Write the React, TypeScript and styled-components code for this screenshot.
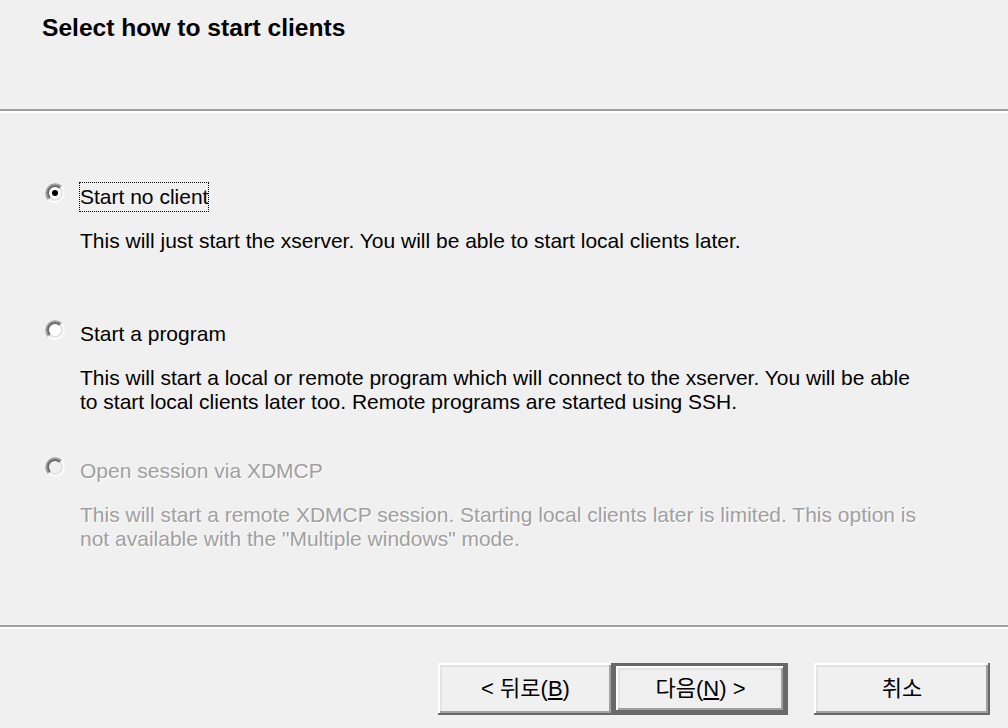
import React from 'react';
import styled, { createGlobalStyle } from 'styled-components';

const Global = createGlobalStyle`
  html, body { margin: 0; padding: 0; background: #f0f0f0; }
  body {
    width: 1008px; height: 728px; overflow: hidden;
    font-family: "Liberation Sans", Arial, "Noto Sans CJK KR", sans-serif;
  }
`;

const Dialog = styled.div`
  width: 1008px;
  height: 728px;
  display: flex;
  flex-direction: column;
  background: #f0f0f0;
  color: #000;
`;

const Header = styled.header`
  height: 109px;
  box-sizing: border-box;
  padding: 14px 0 0 42px;
`;

const Title = styled.h1`
  margin: 0;
  font-size: 24.6px;
  line-height: 28px;
  font-weight: bold;
`;

const Separator = styled.div`
  height: 0;
  border-top: 2px solid #a0a0a0;
  border-bottom: 2px solid #ffffff;
`;

const Body = styled.main`
  flex: 1;
  box-sizing: border-box;
  padding: 69px 0 0 45px;
  display: flex;
  flex-direction: column;
`;

const Option = styled.div`
  display: grid;
  grid-template-columns: 20px auto;
  column-gap: 14px;
  align-content: start;
  align-items: start;
  justify-content: start;
  height: 137px;
  font-size: 21px;
  line-height: 24px;
`;

const RadioSvg = styled.svg`
  display: block;
  width: 20px;
  height: 20px;
  margin-top: 1px;
`;

const Label = styled.span<{ $focused?: boolean; $disabled?: boolean }>`
  justify-self: start;
  padding: 2px 0;
  border: 1px dotted ${p => (p.$focused ? '#000' : 'transparent')};
  white-space: nowrap;
  color: ${p => (p.$disabled ? '#a0a0a0' : '#000')};
  text-shadow: ${p => (p.$disabled ? '1px 1px 0 #ffffff' : 'none')};
`;

const Desc = styled.p<{ $disabled?: boolean }>`
  grid-column: 2;
  margin: 17px 0 0;
  padding-left: 1px;
  white-space: nowrap;
  color: ${p => (p.$disabled ? '#a0a0a0' : '#000')};
  text-shadow: ${p => (p.$disabled ? '1px 1px 0 #ffffff' : 'none')};
`;

const Footer = styled.footer`
  height: 99px;
  box-sizing: border-box;
  padding: 34px 18px 0 0;
  display: flex;
  justify-content: flex-end;
  align-items: flex-start;
`;

const Button = styled.button<{ $default?: boolean; $width: number; $gap?: number }>`
  box-sizing: border-box;
  width: ${p => p.$width}px;
  height: 52px;
  margin: 0 0 0 ${p => p.$gap ?? 0}px;
  padding: 0;
  background: #f0f0f0;
  border: ${p => (p.$default ? '3px solid #696969' : 'none')};
  box-shadow:
    inset -2px -2px #696969,
    inset 2px 2px #ffffff,
    inset -4px -4px #a0a0a0,
    inset 4px 4px #e3e3e3;
  font-family: "Liberation Sans", Arial, "Noto Sans CJK KR", sans-serif;
  font-size: 22px;
  line-height: 24px;
  color: #000;
  display: flex;
  align-items: center;
  justify-content: center;
  cursor: default;
  u { text-underline-offset: 2px; }
`;

function Radio({ checked, disabled }: { checked?: boolean; disabled?: boolean }) {
  return (
    <RadioSvg viewBox="0 0 20 20" aria-hidden="true">
      <circle cx="10" cy="10" r="6.5" fill={disabled ? '#f0f0f0' : '#ffffff'} />
      <path d="M16.36 3.64 A9 9 0 0 0 3.64 16.36" fill="none" stroke="#a0a0a0" strokeWidth="2" />
      <path d="M3.64 16.36 A9 9 0 0 0 16.36 3.64" fill="none" stroke="#ffffff" strokeWidth="2" />
      <path d="M14.95 5.05 A7 7 0 0 0 5.05 14.95" fill="none" stroke="#696969" strokeWidth="2" />
      <path d="M5.05 14.95 A7 7 0 0 0 14.95 5.05" fill="none" stroke="#e3e3e3" strokeWidth="2" />
      {checked && <circle cx="10" cy="10" r="3" fill="#000" />}
    </RadioSvg>
  );
}

export default function App() {
  return (
    <>
      <Global />
      <Dialog>
        <Header>
          <Title>Select how to start clients</Title>
        </Header>
        <Separator />
        <Body>
          <Option>
            <Radio checked />
            <Label $focused>Start no client</Label>
            <Desc>This will just start the xserver. You will be able to start local clients later.</Desc>
          </Option>
          <Option>
            <Radio />
            <Label>Start a program</Label>
            <Desc>
              This will start a local or remote program which will connect to the xserver. You will be able
              <br />
              to start local clients later too. Remote programs are started using SSH.
            </Desc>
          </Option>
          <Option>
            <Radio disabled />
            <Label $disabled>Open session via XDMCP</Label>
            <Desc $disabled>
              This will start a remote XDMCP session. Starting local clients later is limited. This option is
              <br />
              not available with the "Multiple windows" mode.
            </Desc>
          </Option>
        </Body>
        <Separator />
        <Footer>
          <Button $width={175}>&lt; 뒤로(<u>B</u>)</Button>
          <Button $width={175} $default>다음(<u>N</u>) &gt;</Button>
          <Button $width={176} $gap={26}>취소</Button>
        </Footer>
      </Dialog>
    </>
  );
}
